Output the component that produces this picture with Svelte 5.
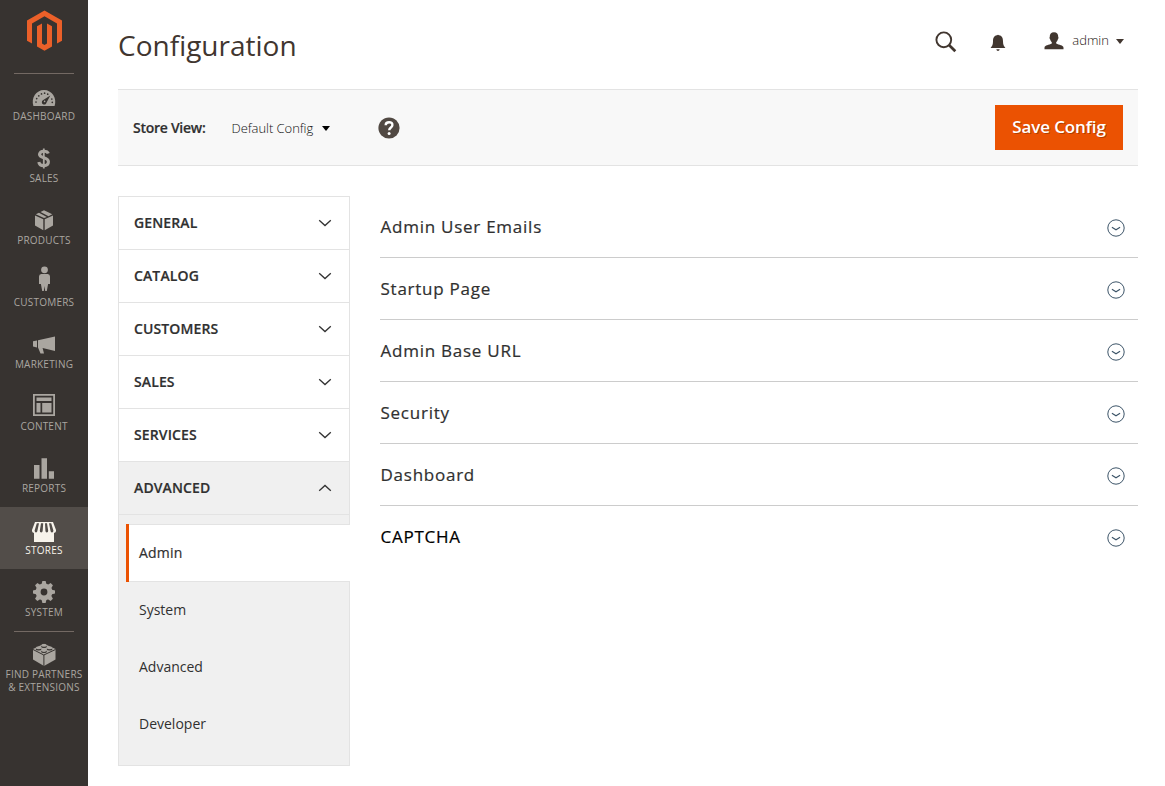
<script>
  const menu = ['Dashboard', 'Sales', 'Products', 'Customers', 'Marketing', 'Content', 'Reports', 'Stores', 'System', 'Partners'];
  const tabs = ['General', 'Catalog', 'Customers', 'Sales', 'Services', 'Advanced'];
  const pages = ['Admin', 'System', 'Advanced', 'Developer'];
  const sections = ['Admin User Emails', 'Startup Page', 'Admin Base URL', 'Security', 'Dashboard', 'CAPTCHA'];
  const ticks = [[36, 29], [36.7, 25.6], [38.8, 22.8], [41.5, 20.9], [44.6, 20.2], [47.7, 21.2], [51.8, 26], [52.3, 29.3]];
</script>

<div class="app">
  <aside>
    <a class="logo" href="#home" aria-label="Home">
      <svg width="36" height="41" viewBox="26 10 36 41" fill="#eb6029">
        <path d="M44.5 10.5 62 20.6V40.7L57 43.6V23.5L44.5 16.3 32 23.5V43.6L27 40.7V20.6Z" />
        <path d="M37 26.3 42 23.4V43.5L44.5 45 47 43.5V23.4L52 26.3V46.4L44.5 50.8 37 46.4Z" />
      </svg>
    </a>
    <nav>
      {#each menu as item}
        <a class="item" class:active={item === 'Stores'} class:last={item === 'Partners'} href="#{item.toLowerCase()}">
          <svg width="32" height="32" viewBox="28 5 32 32">
            {#if item === 'Dashboard'}
              <path d="M33.4 33C30.8 25 36 17 44 17S57.2 25 54.6 33Z" />
              <g class="cut">
                {#each ticks as [x, y]}<circle cx={x} cy={y} r=".85" />{/each}
                <path d="M50.3 22.4 46.6 29.6A2.4 2.4 0 1 1 42.9 27.2Z" />
              </g>
              <circle cx="44.6" cy="28.4" r=".8" />
            {:else if item === 'Sales'}
              <path class="line" stroke-width="3.1" d="M48.3 18.5Q47.5 16.2 43.8 16.2T39.5 19.3C39.5 24 48.4 21.3 48.4 26.7Q48.4 30.6 43.8 30.6T38.9 27" />
              <path class="line" stroke-width="1.8" d="M43.8 13.5V33.5" />
            {:else if item === 'Products'}
              <path d="M35 18.5 43.3 22.3V33.2L35 28.6ZM53 18.5 44.7 22.3V33.2L53 28.6ZM35.8 17.2 39 15.7 46.8 19.9 44 21.1ZM40.5 15.1 44 13.3 52.3 17.2 48.5 19.2Z" />
            {:else if item === 'Customers'}
              <circle cx="44.5" cy="10.8" r="3.4" />
              <path d="M41.3 15H47.7Q50 15 50 17.5V25H48.1L46.8 32H45.2L44.5 27 43.8 32H42.2L40.9 25H39V17.5Q39 15 41.3 15Z" />
            {:else if item === 'Marketing'}
              <path d="M55 15.5V30L42.6 27 44 32.6H40.5L38 26.6V19.3ZM33 20.2 37 19.6V26.5L33 25.4Z" />
            {:else if item === 'Content'}
              <path fill-rule="evenodd" d="M33 11H55V33H33ZM34.8 12.8V31.2H53.2V12.8Z" />
              <path d="M36.5 14.5H51.5V18H36.5ZM36.5 20H40.5V29.5H36.5ZM42.2 20H51.5V29.5H42.2Z" />
            {:else if item === 'Reports'}
              <path d="M34 20H39.5V33.8H34ZM41.5 13.3H47V33.8H41.5ZM48.8 26.3H54V33.8H48.8Z" />
            {:else if item === 'Stores'}
              <path d="M35 15H53L56 23V24A2.5 2 0 0 1 54 26V35H34V26A2.5 2 0 0 1 32 24V23Z" />
              <g class="cut">
                <path d="M36.8 16.3H39L37.4 23.7Q37.3 25.5 36 25.5T34.6 23.6ZM41 16.3H43.2L42.7 23.7Q42.6 25.5 41.2 25.5T39.8 23.7ZM45 16.3H47L48.2 23.7Q48.2 25.5 46.8 25.5T45.4 23.7ZM49 16.3H51.2L53.4 23.6Q53.4 25.5 52 25.5T50.5 23.7Z" />
              </g>
            {:else if item === 'System'}
              <circle class="line" cx="44" cy="23" r="5.9" stroke-width="5" />
              {#each [0, 45, 90, 135, 180, 225, 270, 315] as angle}
                <path transform="rotate({angle} 44 23)" d="M41.4 16 42.4 12H45.6L46.6 16Z" />
              {/each}
            {:else}
              <path d="M33 18 44 12.8 55.5 18V28.4L44 35 33 28.4Z" />
              <path class="cutline" d="M33 18.5 43.8 24 55.5 18.5M43.9 24V35" />
              {#each [[44, 14.4], [38.6, 16.9], [49.6, 16.9], [44, 19.5]] as [x, y]}
                <ellipse class="cut" cx={x} cy={y + 1} rx="2.9" ry="1.5" />
                <ellipse cx={x} cy={y} rx="2.7" ry="1.4" />
              {/each}
            {/if}
          </svg>
          <span>{#if item === 'Partners'}Find Partners<br />&amp; Extensions{:else}{item}{/if}</span>
        </a>
      {/each}
    </nav>
  </aside>

  <main>
    <header>
      <h1>Configuration</h1>
      <div class="tools">
        <svg class="search" width="22" height="22" viewBox="0 0 22 22" fill="none" stroke="#41362f">
          <circle cx="8.8" cy="8.8" r="7.4" stroke-width="1.9" /><path d="m14 14 6.3 6.3" stroke-width="2.7" />
        </svg>
        <svg class="bell" width="16" height="18" viewBox="0 0 16 18" fill="#41362f">
          <path d="M7 1.3Q8 .1 9 1.3C12.4 2 13 4.5 13 7.5S13.8 12 15.4 14H.6C2.2 12 3 10.5 3 7.5S3.6 2 7 1.3ZM6.3 15.2H9.7Q9.4 17 8 17T6.3 15.2Z" />
        </svg>
        <svg class="user" width="20" height="18" viewBox="0 0 20 18" fill="#41362f">
          <path d="M10 .2C12.8.2 14.4 2 14.2 4.8 14.7 5.4 14.5 7 13.8 7.4 13.4 9 12.7 9.6 12.2 10.2V11.5C14.8 13 19.5 13 19.5 15.8V17.2H.5V15.8C.5 13 5.2 13 7.8 11.5V10.2C7.3 9.6 6.6 9 6.2 7.4 5.5 7 5.3 5.4 5.8 4.8 5.6 2 7.2.2 10 .2Z" />
        </svg>
        <span>admin</span>
        <i class="caret"></i>
      </div>
    </header>

    <div class="bar">
      <strong>Store View:</strong>
      <span class="view">Default Config</span>
      <i class="caret black"></i>
      <svg class="help" width="22" height="22" viewBox="0 0 22 22">
        <circle cx="11" cy="11" r="10.6" fill="#514943" />
        <path d="M7.7 8.2Q7.7 5.2 11.1 5.2T14.4 8.1C14.4 10.5 11.2 10.5 11.2 13.3" fill="none" stroke="#fff" stroke-width="2.4" />
        <circle cx="11.1" cy="16.6" r="1.5" fill="#fff" />
      </svg>
      <button>Save Config</button>
    </div>

    <div class="columns">
      <div class="tabs">
        {#each tabs as tab}
          <div class="tab" class:open={tab === 'Advanced'}>
            <span>{tab}</span>
            <svg width="14" height="8" viewBox="0 0 14 8" fill="none" stroke="#333" stroke-width="1.3">
              <path d={tab === 'Advanced' ? 'M1.2 6.8 7 1.4 12.8 6.8' : 'M1.2 1.2 7 6.6 12.8 1.2'} />
            </svg>
          </div>
        {/each}
        <div class="pages">
          {#each pages as page}
            <a href="#{page}" class:current={page === 'Admin'}>{page}</a>
          {/each}
        </div>
      </div>
      <div class="sections">
        {#each sections as section}
          <div class="section" class:dark={section === 'CAPTCHA'}>
            <span>{section}</span>
            <svg width="18" height="18" viewBox="0 0 18 18" fill="none" stroke="#3c5468">
              <circle cx="9" cy="9" r="8.2" stroke-width="1" /><path d="M4.9 8.2 9 10.8 13.1 8.2" stroke-width="1.1" />
            </svg>
          </div>
        {/each}
      </div>
    </div>
  </main>
</div>

<style>
  :global(body) { margin: 0; background: #fff; }
  .app { display: flex; height: 786px; overflow: hidden; font-family: 'Open Sans', sans-serif; color: #303030; }
  .app * { box-sizing: border-box; }
  a { color: inherit; text-decoration: none; }
  svg { display: block; flex: none; }
  aside { width: 88px; flex: none; background: #373330; }
  .logo { display: block; height: 73px; padding: 10px 0 0 26px; }
  nav { position: relative; color: #aaa6a0; }
  nav::before { content: ''; position: absolute; top: 0; left: 14px; width: 60px; border-top: 1px solid #736963; }
  .item { --bg: #373330; display: flex; flex-direction: column; align-items: center; height: 62px; padding-top: 5px; font-size: 10px; line-height: 13px; text-align: center; text-transform: uppercase; white-space: nowrap; letter-spacing: .22px; }
  .item svg { fill: currentColor; }
  .item .line { fill: none; stroke: currentColor; }
  .item .cut { fill: var(--bg); }
  .item .cutline { fill: none; stroke: var(--bg); stroke-width: 1; }
  .active { --bg: #524d49; background: #524d49; color: #f7f3eb; }
  .last { position: relative; height: 75px; }
  .last::before { content: ''; position: absolute; top: 0; left: 14px; width: 60px; border-top: 1px solid #736963; }
  main { flex: 1; min-width: 0; padding: 0 27px 0 30px; }
  header { display: flex; justify-content: space-between; height: 89px; }
  h1 { margin: 26px 0 0; font-size: 28px; line-height: 38px; font-weight: 400; color: #41362f; }
  .tools { display: flex; align-items: center; height: 81px; padding-right: 14px; font-size: 13px; font-weight: 300; color: #41362f; }
  .search { margin-top: 3px; }
  .bell { margin: 4px 0 0 33px; }
  .user { margin-left: 38px; }
  .tools span { margin-left: 8px; padding-bottom: 2px; color: #1c140f; }
  .caret { border: 4.5px solid transparent; border-top: 5px solid #41362f; border-bottom: 0; margin: 2px 0 0 7px; }
  .black { border-top-color: #000; margin-left: 9px; }
  .bar { display: flex; align-items: center; height: 77px; padding: 0 15px; background: #f8f8f8; border: solid #e3e3e3; border-width: 1px 0; font-size: 13px; }
  strong { font-size: 14px; font-weight: 600; letter-spacing: -.27px; -webkit-text-stroke: .2px; color: #303030; }
  .view { margin-left: 26px; font-weight: 300; color: #111; letter-spacing: -.05px; }
  .help { margin-left: 48px; }
  button { margin-left: auto; width: 128px; height: 45px; padding: 0 0 2px; border: 0; background: #eb5202; color: #fff; font: 600 17px 'Open Sans', sans-serif; letter-spacing: -.1px; text-shadow: 1px 1px 0 rgba(0, 0, 0, .25); }
  .columns { display: flex; gap: 30px; margin-top: 30px; }
  .tabs { width: 232px; height: 570px; border: 1px solid #e3e3e3; background: #f0f0f0; }
  .tab { display: flex; justify-content: space-between; align-items: center; height: 53px; padding: 0 17px 0 15px; border-bottom: 1px solid #e3e3e3; background: #fff; font-size: 14px; font-weight: 600; letter-spacing: .12px; -webkit-text-stroke: .2px; text-transform: uppercase; }
  .tab span { padding-bottom: 2px; }
  .tab.open { background: #f0f0f0; }
  .pages { padding: 9px 0 0 7px; }
  .pages a { display: flex; align-items: center; height: 57px; padding-left: 13px; font-size: 14px; }
  .pages a.current { position: relative; height: 58px; margin: 0 -1px -1px 0; padding-bottom: 2px; background: #fff; border: solid #e3e3e3; border-width: 1px 0; letter-spacing: .2px; -webkit-text-stroke: .2px; }
  .pages a.current::before { content: ''; position: absolute; left: 0; top: -1px; bottom: -1px; width: 3px; background: #eb5202; }
  .sections { flex: 1; }
  .section { display: flex; justify-content: space-between; align-items: center; height: 62px; padding-right: 13px; border-bottom: 1px solid #ccc; font-size: 17px; letter-spacing: .75px; -webkit-text-stroke: .2px; }
  .section span { padding-left: .5px; }
  .section svg { margin-top: 2px; }
  .section:last-child { border-bottom-color: transparent; }
  .dark { color: #000; }
</style>
